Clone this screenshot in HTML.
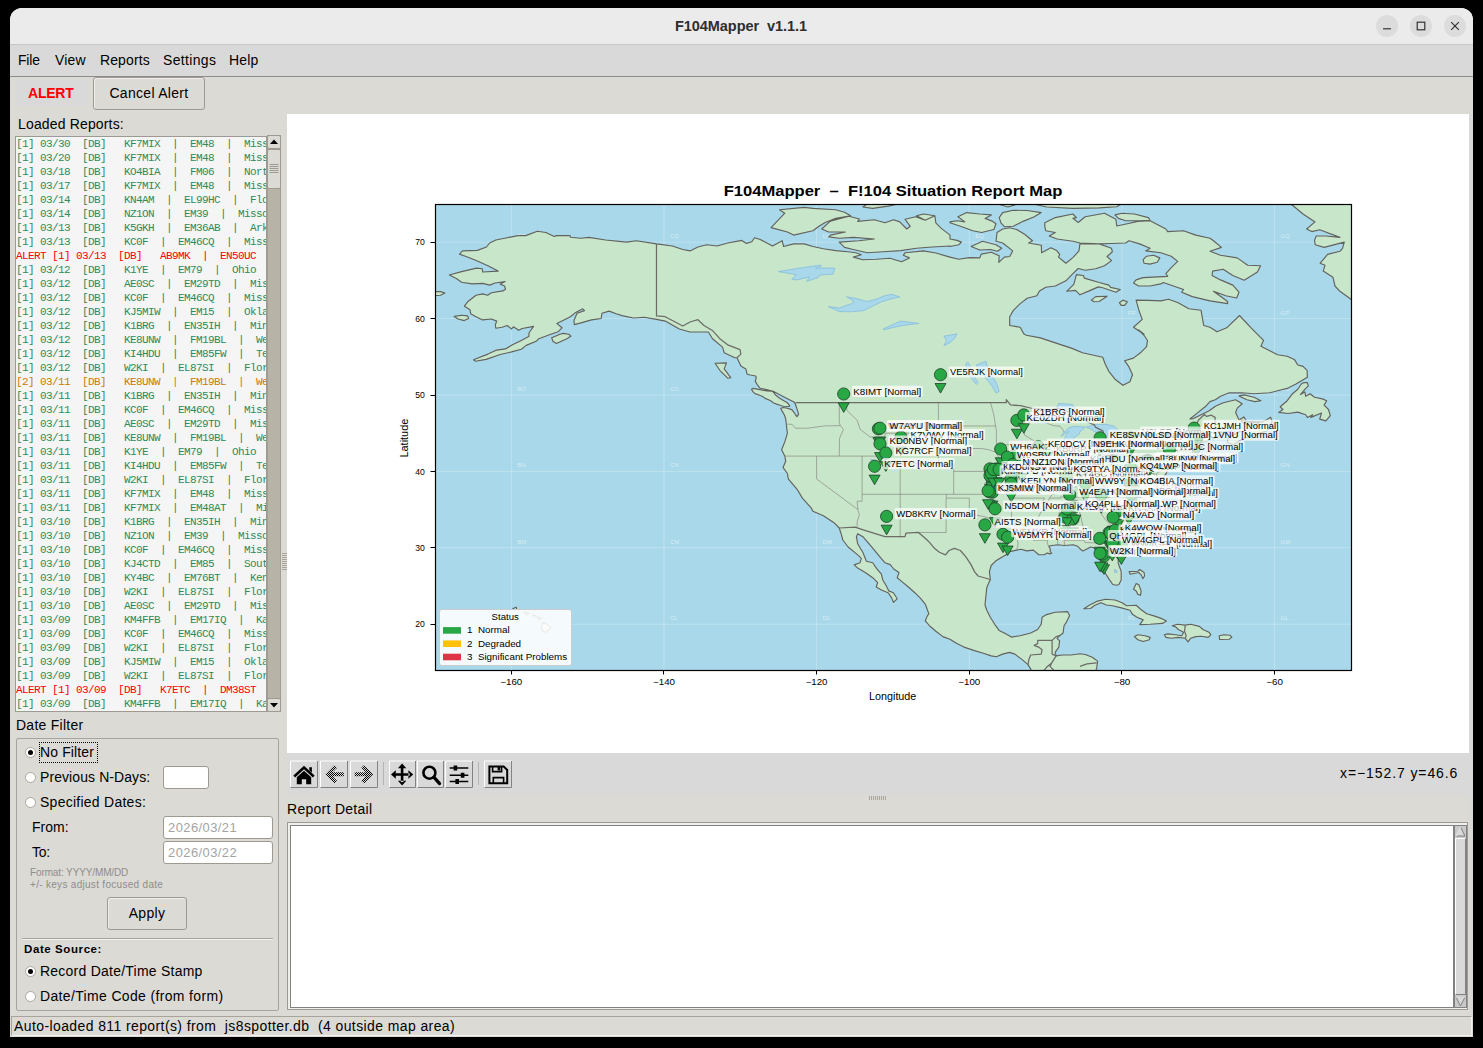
<!DOCTYPE html>
<html><head><meta charset="utf-8"><title>F104Mapper v1.1.1</title>
<style>
*{box-sizing:border-box;margin:0;padding:0}
html,body{width:1483px;height:1048px;overflow:hidden;background:#000}
body{font-family:"Liberation Sans",sans-serif;font-size:15px;color:#000;position:relative}
.a{position:absolute}
#win{left:10px;top:8px;width:1463px;height:1029px;background:#dcdad5;border-radius:12px 12px 0 0}
#title{left:10px;top:8px;width:1463px;height:37px;background:#ebebeb;border-bottom:1px solid #c6c6c6;border-radius:12px 12px 0 0}
#title .t{left:0;width:1462px;top:9px;text-align:center;font-weight:bold;font-size:15px;color:#2e2e2e}
.wb{width:22px;height:22px;border-radius:11px;background:#dcdcdc;top:15px}
#menu{left:10px;top:45px;width:1463px;height:32px;background:#d9d9d9;border-bottom:1px solid #8c8c8c}
#menu span{position:absolute;top:3.4px;font-size:15.5px}
.lbl{font-size:15px;white-space:nowrap;line-height:18px}
.btn{border:1px solid #9e9a91;background:#dcdad5;border-radius:3px;text-align:center;font-size:15px;box-shadow:inset 1px 1px 0 #efeeeb}
.entry{background:#fff;border:1px solid #9e9a91;border-radius:3px;font-size:14px;color:#a3a3a3;padding:2px 0 0 4px;line-height:16px}
.radio{width:11px;height:11px;border-radius:6px;background:#fff;border:1px solid #aaa69d}
.radio.on:after{content:"";position:absolute;left:2px;top:2px;width:5px;height:5px;border-radius:3px;background:#000}
#list{left:15px;top:136px;width:252px;height:576px;background:#f5f5f5;border:1px solid #9e9a91;overflow:hidden;font-family:"Liberation Mono",monospace;font-size:11px;letter-spacing:-0.6px;line-height:14px;white-space:pre;color:#2e8b57}
#list div{height:14px;padding-left:0}
#list .r{color:#ff0000}
#list .o{color:#cc7a00}
.tb{width:27px;height:27px;top:761px;background:#d9d9d9;border:1px solid;border-color:#fff #828282 #828282 #fff}
.tb svg{position:absolute;left:0;top:0}
</style></head><body>
<div id="win" class="a"></div>
<div id="title" class="a"><div class="t a"><span style="font-size:14.5px;letter-spacing:-0.05px">F104Mapper&nbsp; v1.1.1</span></div></div>
<div class="wb a" style="left:1376px"></div><div class="wb a" style="left:1410px"></div><div class="wb a" style="left:1444px"></div>
<svg class="a" style="left:1376px;top:15px" width="90" height="22" viewBox="0 0 90 22" fill="none" stroke="#2e2e2e" stroke-width="1.15"><path d="M7 13.8h8"/><rect x="41.2" y="7.2" width="7.6" height="7.6"/><path d="M75.2 7.2l7.6 7.6M82.8 7.2l-7.6 7.6"/></svg>
<div id="menu" class="a"><span style="left:8px"><span style="font-size:13.97px;letter-spacing:-0.19px">File</span></span><span style="left:45px"><span style="font-size:13.97px;letter-spacing:0.20px">View</span></span><span style="left:90px"><span style="font-size:13.97px;letter-spacing:0.13px">Reports</span></span><span style="left:153px"><span style="font-size:13.97px;letter-spacing:0.35px">Settings</span></span><span style="left:219px"><span style="font-size:13.97px;letter-spacing:0.22px">Help</span></span></div>
<div class="a" style="left:16px;top:80px;width:72px;height:26px;background:#d9d9d9"></div>
<div class="a lbl" style="left:28px;top:84px;font-weight:bold;color:#ff0000"><span style="font-size:13.97px;letter-spacing:-0.21px">ALERT</span></div>
<div class="a btn" style="left:93px;top:77px;width:112px;height:33px;line-height:30px"><span style="font-size:13.97px;letter-spacing:0.31px">Cancel Alert</span></div>
<div class="a lbl" style="left:18px;top:115px"><span style="font-size:13.97px;letter-spacing:0.17px">Loaded Reports:</span></div>
<div id="list" class="a"><div>[1] 03/30  [DB]   KF7MIX  |  EM48  |  Missouri</div><div>[1] 03/20  [DB]   KF7MIX  |  EM48  |  Missouri</div><div>[1] 03/18  [DB]   KO4BIA  |  FM06  |  North Carolina</div><div>[1] 03/17  [DB]   KF7MIX  |  EM48  |  Missouri</div><div>[1] 03/14  [DB]   KN4AM  |  EL99HC  |  Florida</div><div>[1] 03/14  [DB]   NZ1ON  |  EM39  |  Missouri</div><div>[1] 03/13  [DB]   K5GKH  |  EM36AB  |  Arkansas</div><div>[1] 03/13  [DB]   KC0F  |  EM46CQ  |  Missouri</div><div class="r">ALERT [1] 03/13  [DB]   AB9MK  |  EN50UC</div><div>[1] 03/12  [DB]   K1YE  |  EM79  |  Ohio</div><div>[1] 03/12  [DB]   AE0SC  |  EM29TD  |  Missouri</div><div>[1] 03/12  [DB]   KC0F  |  EM46CQ  |  Missouri</div><div>[1] 03/12  [DB]   KJ5MIW  |  EM15  |  Oklahoma</div><div>[1] 03/12  [DB]   K1BRG  |  EN35IH  |  Minnesota</div><div>[1] 03/12  [DB]   KE8UNW  |  FM19BL  |  West Virginia</div><div>[1] 03/12  [DB]   KI4HDU  |  EM85FW  |  Tennessee</div><div>[1] 03/12  [DB]   W2KI  |  EL87SI  |  Florida</div><div class="o">[2] 03/11  [DB]   KE8UNW  |  FM19BL  |  West Virginia</div><div>[1] 03/11  [DB]   K1BRG  |  EN35IH  |  Minnesota</div><div>[1] 03/11  [DB]   KC0F  |  EM46CQ  |  Missouri</div><div>[1] 03/11  [DB]   AE0SC  |  EM29TD  |  Missouri</div><div>[1] 03/11  [DB]   KE8UNW  |  FM19BL  |  West Virginia</div><div>[1] 03/11  [DB]   K1YE  |  EM79  |  Ohio</div><div>[1] 03/11  [DB]   KI4HDU  |  EM85FW  |  Tennessee</div><div>[1] 03/11  [DB]   W2KI  |  EL87SI  |  Florida</div><div>[1] 03/11  [DB]   KF7MIX  |  EM48  |  Missouri</div><div>[1] 03/11  [DB]   KF7MIX  |  EM48AT  |  Missouri</div><div>[1] 03/10  [DB]   K1BRG  |  EN35IH  |  Minnesota</div><div>[1] 03/10  [DB]   NZ1ON  |  EM39  |  Missouri</div><div>[1] 03/10  [DB]   KC0F  |  EM46CQ  |  Missouri</div><div>[1] 03/10  [DB]   KJ4CTD  |  EM85  |  South Carolina</div><div>[1] 03/10  [DB]   KY4BC  |  EM76BT  |  Kentucky</div><div>[1] 03/10  [DB]   W2KI  |  EL87SI  |  Florida</div><div>[1] 03/10  [DB]   AE0SC  |  EM29TD  |  Missouri</div><div>[1] 03/09  [DB]   KM4FFB  |  EM17IQ  |  Kansas</div><div>[1] 03/09  [DB]   KC0F  |  EM46CQ  |  Missouri</div><div>[1] 03/09  [DB]   W2KI  |  EL87SI  |  Florida</div><div>[1] 03/09  [DB]   KJ5MIW  |  EM15  |  Oklahoma</div><div>[1] 03/09  [DB]   W2KI  |  EL87SI  |  Florida</div><div class="r">ALERT [1] 03/09  [DB]   K7ETC  |  DM38ST</div><div>[1] 03/09  [DB]   KM4FFB  |  EM17IQ  |  Kansas</div></div>
<div class="a" style="left:267px;top:135px;width:14px;height:577px;background:#b8b3a7;border-left:1px solid #a39e92;border-right:1px solid #a39e92"></div>
<div class="a" style="left:267px;top:135px;width:14px;height:14px;background:#dcdad5;border:1px solid #9e9a91;border-radius:2px"></div>
<svg class="a" style="left:267px;top:135px" width="14" height="14"><path d="M3 9L7 4.5L11 9z" fill="#000"/></svg>
<div class="a" style="left:267px;top:698px;width:14px;height:14px;background:#dcdad5;border:1px solid #9e9a91;border-radius:2px"></div>
<svg class="a" style="left:267px;top:698px" width="14" height="14"><path d="M3 5L7 9.5L11 5z" fill="#000"/></svg>
<div class="a" style="left:267px;top:149px;width:14px;height:40px;background:#dcdad5;border:1px solid #9e9a91;border-radius:2px"></div>
<svg class="a" style="left:267px;top:149px" width="14" height="40" stroke="#9e9a91" stroke-width="1"><path d="M2.5 15.5h9M2.5 17.5h9M2.5 19.5h9M2.5 21.5h9M2.5 23.5h9"/></svg>
<svg class="a" style="left:281px;top:552px" width="6" height="20" stroke="#a9a59c" stroke-width="1"><path d="M1 1.5h5M1 3.5h5M1 5.5h5M1 7.5h5M1 9.5h5M1 11.5h5M1 13.5h5M1 15.5h5M1 17.5h5"/></svg>
<div class="a lbl" style="left:16px;top:716px"><span style="font-size:13.97px;letter-spacing:0.27px">Date Filter</span></div>
<div class="a" style="left:16px;top:738px;width:263px;height:273px;border:1px solid #a8a49b;border-radius:2px"></div>
<div class="a radio on" style="left:25px;top:747px"></div>
<div class="a" style="left:39px;top:742px;width:59px;height:21px;border:1px dotted #000"></div>
<div class="a lbl" style="left:40px;top:743px"><span style="font-size:13.97px;letter-spacing:0.13px">No Filter</span></div>
<div class="a radio" style="left:25px;top:772px"></div>
<div class="a lbl" style="left:40px;top:768px"><span style="font-size:13.97px;letter-spacing:0.10px">Previous N-Days:</span></div>
<div class="a entry" style="left:163px;top:766px;width:46px;height:23px"></div>
<div class="a radio" style="left:25px;top:797px"></div>
<div class="a lbl" style="left:40px;top:793px"><span style="font-size:13.97px;letter-spacing:0.27px">Specified Dates:</span></div>
<div class="a lbl" style="left:32px;top:818px"><span style="font-size:13.97px;letter-spacing:0.02px">From:</span></div>
<div class="a entry" style="left:163px;top:816px;width:110px;height:23px"><span style="font-size:12.90px;letter-spacing:0.46px">2026/03/21</span></div>
<div class="a lbl" style="left:32px;top:843px"><span style="font-size:13.97px;letter-spacing:-0.19px">To:</span></div>
<div class="a entry" style="left:163px;top:841px;width:110px;height:23px"><span style="font-size:12.90px;letter-spacing:0.46px">2026/03/22</span></div>
<div class="a" style="left:30px;top:867px;font-size:10px;line-height:12px;color:#8d8d8d;white-space:nowrap"><span style="font-size:10.00px;letter-spacing:-0.12px">Format: YYYY/MM/DD</span><br><span style="font-size:10.00px;letter-spacing:0.30px">+/- keys adjust focused date</span></div>
<div class="a btn" style="left:107px;top:897px;width:80px;height:33px;line-height:30px"><span style="font-size:13.97px;letter-spacing:0.35px">Apply</span></div>
<div class="a" style="left:22px;top:938px;width:251px;height:2px;border-top:1px solid #a8a49b;border-bottom:1px solid #f2f1ef"></div>
<div class="a" style="left:24px;top:943px;font-size:11.5px;font-weight:bold;white-space:nowrap"><span style="font-size:11.50px;letter-spacing:0.59px">Date Source:</span></div>
<div class="a radio on" style="left:25px;top:966px"></div>
<div class="a lbl" style="left:40px;top:962px"><span style="font-size:13.97px;letter-spacing:0.25px">Record Date/Time Stamp</span></div>
<div class="a radio" style="left:25px;top:991px"></div>
<div class="a lbl" style="left:40px;top:987px"><span style="font-size:13.97px;letter-spacing:0.36px">Date/Time Code (from form)</span></div>
<div class="a" style="left:11px;top:1016px;width:1461px;height:20px;border:1px solid;border-color:#a8a49b #f2f1ef #f2f1ef #a8a49b"></div>
<div class="a lbl" style="left:14px;top:1017px"><span style="font-size:13.97px;letter-spacing:0.41px">Auto-loaded 811 report(s) from&nbsp; js8spotter.db&nbsp; (4 outside map area)</span></div>
<div class="a" style="left:287px;top:114px;width:1182px;height:639px;background:#fff"></div>
<div class="a" style="left:287px;top:753px;width:1186px;height:42px;background:#d9d9d9"></div><div class="a" style="left:1469px;top:114px;width:4px;height:902px;background:#d9d9d9"></div>
<div class="a lbl" style="left:1340px;top:764px;font-size:14px"><span style="font-size:13.97px;letter-spacing:0.92px">x=−152.7 y=46.6</span></div>
<svg class="a" style="left:868px;top:795px" width="20" height="6" stroke="#a9a59c" stroke-width="1"><path d="M1.5 1v4M3.5 1v4M5.5 1v4M7.5 1v4M9.5 1v4M11.5 1v4M13.5 1v4M15.5 1v4M17.5 1v4"/></svg>
<div class="a lbl" style="left:287px;top:800px"><span style="font-size:13.97px;letter-spacing:0.30px">Report Detail</span></div>
<div class="a" style="left:287px;top:822px;width:1181px;height:188px;border:1px solid #9e9a91;background:#efeeeb"></div>
<div class="a" style="left:290px;top:825px;width:1164px;height:183px;background:#fff;border:1px solid #828282"></div>
<div class="a" style="left:1454px;top:825px;width:13px;height:183px;background:#c9c9c9;border:1px solid #828282"></div>
<div class="a" style="left:1455px;top:838px;width:11px;height:157px;background:#d9d9d9;border:1px solid;border-color:#fff #828282 #828282 #fff"></div>
<svg class="a" style="left:1455px;top:826px" width="11" height="11"><path d="M5.5 1L10 10H1z" fill="#d9d9d9" stroke="#828282"/><path d="M5.5 1L1 10" stroke="#fff"/></svg>
<svg class="a" style="left:1455px;top:996px" width="11" height="11"><path d="M5.5 10L10 1H1z" fill="#d9d9d9" stroke="#828282"/><path d="M1 1H10" stroke="#fff"/></svg>
<svg class="a" style="left:0;top:0" width="1483" height="1048" viewBox="0 0 1483 1048">
<defs><pattern id="st" width="2" height="2" patternUnits="userSpaceOnUse"><rect width="1" height="1" fill="#000"/><rect x="1" y="1" width="1" height="1" fill="#000"/></pattern></defs>
<g id="tbb">
<path d="M290.5,787.5v-26.5h27M320.5,787.5v-26.5h27M350.5,787.5v-26.5h27M389.5,787.5v-26.5h26M417.5,787.5v-26.5h26M445.5,787.5v-26.5h27M484.5,787.5v-26.5h27" stroke="#fff" fill="none"/>
<path d="M290.5,787.5h27v-26.5M320.5,787.5h27v-26.5M350.5,787.5h27v-26.5M389.5,787.5h26v-26.5M417.5,787.5h26v-26.5M445.5,787.5h27v-26.5M484.5,787.5h27v-26.5" stroke="#828282" fill="none"/>
<path d="M383.5,762v23M478.5,762v23" stroke="#b5b5b5" fill="none"/>
</g>
<!-- home -->
<path d="M304,765.8L314.6,775.6L312.9,777.4L304,769.2L295.1,777.4L293.4,775.6ZM296.8,777.3L304,770.8L311.2,777.3V784.2H306.2V779.2H301.8V784.2H296.8ZM309.3,767.2h2.6v5.4l-2.6,-2.4z" fill="#000"/>
<!-- back / forward (disabled, stippled) -->
<path d="M325.3,774.3L334.4,765L337.2,767.7L332.6,772.3H343.8V776.3H332.6L337.2,780.9L334.4,783.6Z" fill="url(#st)"/>
<path d="M373.2,774.3L364.1,765L361.3,767.7L365.9,772.3H354.7V776.3H365.9L361.3,780.9L364.1,783.6Z" fill="url(#st)"/>
<!-- pan -->
<path d="M400.8,767h2.6v15h-2.6zM394.6,773.2h15v2.6h-15zM402.1,763.4l4.2,4.8h-8.4zM402.1,785.6l4.2,-4.8h-8.4zM391,774.5l4.8,-4.2v8.4zM413.2,774.5l-4.8,-4.2v8.4z" fill="#000"/>
<!-- zoom -->
<circle cx="429.4" cy="772.7" r="6" fill="none" stroke="#000" stroke-width="2.6"/>
<path d="M434.3,777.6L439.6,783.6" stroke="#000" stroke-width="3.2" stroke-linecap="round"/>
<!-- configure -->
<path d="M449.7,767.9h18.6M449.7,775.2h18.6M449.7,781.4h18.6" stroke="#000" stroke-width="1.5" fill="none"/>
<path d="M453.6,765.4h3.6v5h-3.6zM460.8,772.7h3.6v5h-3.6zM455.4,778.9h3.6v5h-3.6z" fill="#000"/>
<!-- save -->
<path d="M489.4,766.4H503.6L507.2,770V783.3H489.4Z" fill="none" stroke="#000" stroke-width="2"/>
<path d="M492.6,766.4V771.6H501.6V766.4M493.3,783.3V777.6H503.6V783.3" fill="none" stroke="#000" stroke-width="1.6"/>
<rect x="497.6" y="766.6" width="2.6" height="3.8" fill="#000"/>
</svg>
<svg class="a" style="left:0;top:0" width="1483" height="1048" viewBox="0 0 1483 1048" font-family="Liberation Sans,sans-serif">
<defs><clipPath id="mc"><rect x="435" y="204" width="916" height="466"/></clipPath></defs>
<rect x="435" y="204" width="916" height="466" fill="#a8d8ea"/>
<g clip-path="url(#mc)">
<path d="M511.3,204V670M664.0,204V670M816.6,204V670M969.3,204V670M1122.0,204V670M1274.6,204V670M435,624.2H1351M435,547.8H1351M435,471.4H1351M435,395.0H1351M435,318.6H1351M435,242.2H1351" stroke="#fff" stroke-opacity="0.32" stroke-width="0.8" fill="none"/>
<g font-size="6" fill="#fff" fill-opacity="0.55"><text x="364.7" y="696.6">AK</text><text x="364.7" y="620.2">AL</text><text x="364.7" y="543.8">AM</text><text x="364.7" y="467.4">AN</text><text x="364.7" y="391.0">AO</text><text x="364.7" y="314.6">AP</text><text x="364.7" y="238.2">AQ</text><text x="517.3" y="696.6">BK</text><text x="517.3" y="620.2">BL</text><text x="517.3" y="543.8">BM</text><text x="517.3" y="467.4">BN</text><text x="517.3" y="391.0">BO</text><text x="517.3" y="314.6">BP</text><text x="517.3" y="238.2">BQ</text><text x="670.0" y="696.6">CK</text><text x="670.0" y="620.2">CL</text><text x="670.0" y="543.8">CM</text><text x="670.0" y="467.4">CN</text><text x="670.0" y="391.0">CO</text><text x="670.0" y="314.6">CP</text><text x="670.0" y="238.2">CQ</text><text x="822.6" y="696.6">DK</text><text x="822.6" y="620.2">DL</text><text x="822.6" y="543.8">DM</text><text x="822.6" y="467.4">DN</text><text x="822.6" y="391.0">DO</text><text x="822.6" y="314.6">DP</text><text x="822.6" y="238.2">DQ</text><text x="975.3" y="696.6">EK</text><text x="975.3" y="620.2">EL</text><text x="975.3" y="543.8">EM</text><text x="975.3" y="467.4">EN</text><text x="975.3" y="391.0">EO</text><text x="975.3" y="314.6">EP</text><text x="975.3" y="238.2">EQ</text><text x="1128.0" y="696.6">FK</text><text x="1128.0" y="620.2">FL</text><text x="1128.0" y="543.8">FM</text><text x="1128.0" y="467.4">FN</text><text x="1128.0" y="391.0">FO</text><text x="1128.0" y="314.6">FP</text><text x="1128.0" y="238.2">FQ</text><text x="1280.6" y="696.6">GK</text><text x="1280.6" y="620.2">GL</text><text x="1280.6" y="543.8">GM</text><text x="1280.6" y="467.4">GN</text><text x="1280.6" y="391.0">GO</text><text x="1280.6" y="314.6">GP</text><text x="1280.6" y="238.2">GQ</text></g>
<path d="M656.5,243.9L672.3,246L682.8,249.5L690,250.9L697.9,247L706.7,244.8L717.2,246L727.7,243L741.8,240.4L746.5,243.4L751.8,241.8L754.6,237.7L760.2,239.5L772.5,246L782.2,240.7L783.6,246.5L793.6,243.9L804.1,243.9L812.9,246.5L823.4,248.8L835.7,250.6L848,251.8L855.9,252.7L861.2,254.8L853.3,257.1L862.9,259.7L876.1,259.3L890.1,258.3L901.5,261.8L909.4,257.9L903.3,255.3L905.1,252.7L923.5,250.9L935.8,253L950,257.1L958.8,259.3L969.3,257.6L979.8,257.9L981.2,254.1L991.3,252.3L999.2,255.8L998.8,262.3L1004.4,257.1L1009.7,256.5L1012.7,250.9L1002.7,243L996,241.3L997,232.5L1002.7,229L1009.7,227.7L1016.7,229.5L1024.6,234.2L1032.5,240.7L1028.6,243L1041.3,245.3L1041.6,252.7L1050.9,247.8L1056.7,250.6L1059.7,254.4L1058.5,257.1L1065.9,263.2L1072.9,257.6L1079,250.9L1079.9,243.9L1099.2,243.9L1111.5,248.3L1112.4,251.8L1107.1,256.5L1111.5,260.6L1104.5,265.8L1095.7,268.8L1085.2,270.2L1078.2,268.5L1072.9,273.7L1065.9,280.8L1055.3,286L1045.7,287.3L1039.5,290.9L1036.9,295.7L1027.2,298.3L1020.2,303.6L1013.2,310.6L1009.7,316.7L1009.7,325.5L1020.2,327.3L1023.7,333.8L1026.3,335.3L1040.4,337.9L1050.9,341.4L1061.4,344.9L1072,348.4L1082.5,352.8L1094.8,355.5L1102.7,357.2L1105.3,364.2L1108.8,371.3L1115,379.2L1122.9,385.3L1129.9,381.8L1132.5,374.8L1129,366.9L1124.6,360.7L1133.4,358.1L1140.4,352.8L1146.6,346.7L1147.5,340.5L1144,335.3L1138.7,330L1144,334.3L1133.5,327.3L1142.2,319.4L1138.7,309.7L1136.1,300.1L1148.4,300.4L1160.7,300.9L1168.6,299.2L1178.2,302.7L1188.8,308.8L1201,310.2L1203.7,325.5L1210,327.3L1217,331.7L1226.7,327.8L1239.5,315.5L1251.3,328.2L1263.5,340.4L1260.9,346.2L1277.6,354.8L1287.2,356.2L1294.3,359.4L1297.8,365L1303,366.4L1307.1,370.3L1307.4,377.3L1296,384L1287.2,388.4L1276.7,391L1269.7,392.8L1253.9,393.7L1241.6,392.8L1229.3,392.8L1220.5,396.3L1215.3,399.8L1210,401.6L1205.7,406.3L1196.9,413.4L1189.9,419L1193.4,418.6L1202.2,414.2L1209.2,410.7L1215.4,406.3L1223.3,402.8L1235.6,399.8L1242.2,403.7L1237.3,408.1L1235.6,412.5L1239.1,419.9L1243.8,416.9L1246.6,421.3L1261.9,422.1L1267.2,419.5L1270.7,417.2L1272.1,422.1L1267,430.9L1250.2,436.3L1241.8,439.3L1233.4,444.7L1227.3,442.4L1228.1,437.8L1241,430.9L1237.2,428.6L1228.8,431.7L1220.4,432.4L1221.2,434.7L1213.6,438.5L1205.9,441.6L1197.5,443.1L1193,447.7L1192.2,453.8L1194.5,457.6L1198.3,457.6L1198.3,459.2L1193,459.9L1183.8,461.5L1175.4,462.2L1170.1,464.5L1181.5,463L1183.8,464.5L1173.1,466.8L1167.8,466.8L1167.8,468.3L1166.2,473.7L1160.9,479.8L1156.3,475.2L1159.4,480.6L1159.4,483.6L1157.1,487.4L1153.3,492.8L1152.5,492L1150.2,485.9L1151,481.3L1149.4,477.5L1148.7,481.3L1150.2,487.4L1150.2,495.1L1153.3,497.4L1154.8,505L1156.3,508.1L1149.4,511.1L1141.8,513.4L1137.2,518L1132.7,518L1128.8,521.1L1128.1,523.4L1119.7,528.7L1115.1,532.5L1112,537.1L1110.5,542.5L1112,547.8L1114.3,553.9L1118.2,559.3L1118.2,563.1L1121.2,571.5L1121.2,579.9L1118.9,584.5L1116.6,585.2L1112.8,584.5L1109,579.1L1105.2,573L1101.4,566.9L1099.8,563.8L1101.4,558.5L1099.8,554.7L1093.7,547.8L1090.7,547L1083,550.9L1081.5,550.1L1077.7,546.3L1073.1,544.7L1064.7,545.5L1057.9,544.7L1051.7,545.5L1048.7,546.3L1050.2,548.6L1050.2,551.6L1051.7,553.1L1050.2,553.9L1047.2,553.1L1044.1,554.7L1038.8,554.7L1033.4,550.1L1026.6,550.9L1021.2,549.3L1016.6,550.1L1009.8,551.6L1008.7,553.2L1002.6,556.7L995.6,561.1L991.2,565.5L989.4,571.6L990.3,579.5L986.8,587.4L985.9,596.2L985,605L986.8,610.2L990.3,617.2L994.7,624.3L999.1,630.4L1004.3,633L1011.4,637.1L1020.1,635.7L1030.7,633L1037.7,629.5L1041.2,624.3L1042.1,617.2L1046.5,614.6L1055.2,612.3L1067.5,611.6L1069.6,615.5L1066.7,621.6L1064,626L1063.1,633L1059.6,635.7L1057,638.3L1059.6,640.9L1058.8,647.1L1055.2,652.4L1056.1,655.9L1062.3,655L1071,655L1080,653.8L1085.3,654.5L1092.3,657.3L1097.6,661.1L1096.7,668.2L1094.9,673.4L1033.3,673.4L1028,664.6L1021.9,659.4L1014.9,654.1L1009.6,652.4L1002.6,654.1L996.4,656.7L991.2,655.9L983.3,653.2L974.5,650.6L964,647.1L956.9,643.6L949.9,639.2L942.9,636.6L935.9,631.3L929.7,626L925.3,620.8L927.1,616.4L928.8,613.7L925.3,604.1L920.1,597.9L914.8,592.7L907.8,586.5L902.5,582.1L897.2,577.7L899,572.5L893.7,569L890.2,564.6L885,562.8L879.7,556.7L876.2,552.3L869.1,543.8L862.9,536.7L857.7,533.8L856.4,536.7L857.7,543.8L862.9,552.5L866.4,561.3L872.7,562.8L876.5,568.4L881.4,574.2L882.8,580L886.4,586L888.8,590.9L893.4,592.7L897.2,598.8L893.4,602.3L891.6,597.9L888.1,592.7L881.4,590L876.2,587L877.6,582.7L872.7,577.7L866,573L857.7,568.1L854.2,564.9L860,562.8L861.3,558.4L857.7,554.9L848.1,547L842.8,540L841,533.2L839.2,528L834,522.7L823.4,515.7L812.9,511.3L811.1,507.8L802.4,498.1L797.1,489.3L788.3,478.8L787.4,473.5L783,467.4L785.7,461.2L784.8,456L781.6,449.8L784.8,441.9L787.4,433.2L786.2,423.5L785.7,419L784.4,415L782,410.9L780.7,408.2L783.4,407.5L787.4,408.2L791.8,409.6L793.5,411.6L795.2,414.3L796.9,416.7L798.6,414.3L797.6,410.9L795.2,403.5L793.9,402L787.4,398.7L780.7,395.3L773.2,391.3L766.4,389.6L760,388.2L757.6,385.2L755.2,381.1L756.3,377.7L755.6,376L750.2,375L747.1,374.2L745.8,368.9L740.9,365.9L737,357.7L734.8,357.7L724.2,352.7L722.5,347.1L712.5,338.7L708.4,332L690,332L679.3,329L665.2,321.1L656.5,319.4L644.2,317.3L633.6,318L623.1,315.9L616.1,313.8L609.1,311.1L602,313.2L601.2,318.5L591.5,319.9L581,322.9L574.3,324.6L574,320.3L577.1,313.2L584.5,310.6L582.7,308.8L575.7,312.4L570.4,316.7L563.4,320.3L556.8,323.4L562,327.8L558.2,331.7L549.4,334.8L538.8,338.7L536.2,341.3L526.2,345.4L521.3,349.2L511.6,351.9L500.2,354.5L486.2,359.4L475.3,361.2L473.5,359.8L487.9,354.1L496.7,350.1L505.5,348.9L512.5,344.8L521.3,340.4L528.7,336.6L529.2,332.5L533.6,326.4L522.2,328.5L518.7,330.3L513.4,326.8L511.6,329L507.2,325.5L502,327.3L495.8,328.2L495.3,325L496.7,321.1L491.4,319L482.7,319.9L476,316.7L470.7,313.8L470,309.7L464.4,306.2L467.7,301.8L476,295.3L482.7,293.9L487.6,295.3L491.4,292.7L502.9,290.9L505.5,289.2L504.6,286L500.2,284.3L505.1,281.6L495,283L489.7,285.1L482.7,283.4L472.1,283.9L461.6,282.2L456.3,278.5L449.3,275L461.6,271.6L476.5,268.1L482.3,268.8L482.7,272L498.1,271.1L487.9,265.8L475.6,260.2L466,256.5L459.5,254.1L462.5,250.9L477.4,250.4L486.5,247L489.7,243L495.8,240L507.2,237.7L517.8,235.6L525.7,235.6L537.4,231.2L545.9,232.5L554.3,236.5L556.4,235.6L570.1,235.5L570.4,237.2L581,238.3L588.9,237.4L605.6,240L626.6,242.1L636.3,240.7ZM433.5,291.6L440.5,291.6L444.9,293L440.5,295.3L433.5,295.7ZM454.2,316.4L461.6,315.3L467.7,315.9L468.6,318.5L464.2,320.6L458.1,319ZM551.7,337.8L559.9,334.3L563.4,333.4L568.7,334.3L571,336.1L566.9,338.7L556.4,343.4L552.9,341.3ZM430,271.1L435.3,272L435.3,274.6L430,275.5ZM771.1,227.6L784.8,213.2L779.5,209.7L804.1,207.4L812.9,208.4L835.7,209.7L844.5,212.3L850.6,215.8L835.7,218.4L825.2,222.5L819,226.3L812.9,230.7L793.6,235.1L787.4,232ZM821.7,229L830.4,221.1L848.9,216.2L859.4,219L857.7,221.4L874.3,219.7L884.9,222.8L893.6,219.7L899.8,221.9L906.8,229L910.3,226.3L905.1,219.3L915.6,216.7L925.2,220.2L934.9,215.8L935.8,222.8L941,228.1L950,235.1L950,239L957,240.4L961.4,242.1L958.8,244.8L950,246.5L950,246L932.3,247L916.5,248.3L900.7,250.6L883.1,251.8L867.3,252.7L853.3,249.5L844.5,247.4L839.2,242.1L858.5,240.7L874.3,239L853.3,237.4L839.2,238.3L828.7,236.9L830.4,235.1L845.4,232L828.7,232ZM916.5,215.8L923.5,214L934.9,215.8L925.2,220.2ZM862.9,207L869.1,202.6L904.2,202.6L888.4,206.1L872.6,208.4ZM950,221.9L957,220.7L964.9,221.9L957.9,216.7L966.7,212.6L979.8,214L991.3,214.9L985.1,218.4L992.1,221.1L996,223.7L993.9,229.5L981.6,232.5L972.8,230.7L960.5,226.3L950,222.8ZM971.1,246.5L982.5,241.3L996,244.8L1001.8,248.3L997.4,251.3L990.4,249.5L979.8,250ZM999.2,217.6L1002.7,212.6L1013.2,210.2L1027.2,210.5L1041.3,212.6L1034.3,216.7L1023.7,221.1L1013.2,226.3L1004.4,226.7L1000.9,222.8ZM993,202.6L1007.9,207L1015,204.9L1016.7,202.6ZM1027.2,202.6L1046.6,207L1072.9,208.4L1099.2,207.9L1116.8,206.7L1123.8,202.6ZM1044.8,226.3L1044.8,222.8L1055.3,217.6L1072.9,214L1076.4,217.6L1072.9,218.4L1078.2,222.5L1085.2,216.7L1104.5,213.2L1115.9,219.3L1116.8,226L1127.3,223.7L1137.8,221.4L1150.1,220.7L1165.9,229L1167.7,231.6L1183.5,230.7L1195.8,235.1L1210,238.3L1213.5,240.7L1221.4,247.4L1210,251.3L1220.5,255.3L1237.2,257.9L1247.7,265.3L1260.6,265.8L1257.4,272L1244.2,280.2L1232.8,275.5L1223.2,269.3L1212.6,271.1L1212.1,275.5L1220.5,279.9L1232.8,285.1L1239,292.2L1236.7,298L1225.8,295.7L1213.5,291.3L1227.6,301.5L1227.6,303.6L1210,300.9L1192.3,296.6L1181.7,292.2L1183.5,289.5L1163.3,282.5L1160.7,283.9L1150.1,286L1138.7,286L1133.5,282.9L1136.1,279.9L1143.1,277.6L1167.7,276.4L1165.9,273.7L1171.2,267.6L1177.7,261.4L1171.2,256.2L1160.7,252.7L1145.7,250.9L1150.1,248.3L1139.6,243.9L1129.1,240.7L1125.6,243L1111.5,243.5L1099.2,243.9L1079.9,243L1072.9,241.3L1057.1,239L1049.2,236L1055.3,232.5L1045.7,230.7ZM1115,214.9L1122,213.2L1134.3,214L1148.4,217.6L1150.1,220.2L1139.6,220.7L1125.6,220.7L1118.5,218.4ZM1066.7,291.3L1073.8,284.3L1076.4,274.6L1083.4,275.5L1084.3,278.1L1099.2,282.5L1108.9,285.1L1110.6,287.4L1120.3,289.5L1115.9,292.2L1102.7,287.8L1098.3,286.9L1090.4,290.4L1079.9,294.8L1075.5,290.4ZM1091.3,300.1L1095.7,296.6L1107.1,296.2L1099.2,301.5L1094,301.8ZM1119.4,302.7L1122.9,300.1L1127.3,301.8L1124.7,305.3L1121.2,305.3ZM1143.1,259.7L1146.6,256.2L1153.6,255.3L1159.8,257.9L1157.2,262.3L1150.1,264.1L1144,263.2ZM1287.2,202.6L1292.5,205.3L1303,214L1315,221.9L1306.6,229L1311.8,231.6L1319.7,229.8L1339.9,237.4L1325.9,236L1316.2,236L1314.5,240.4L1315.3,244.8L1324.1,247.4L1344.3,242.1L1342.5,248.3L1339.9,251.3L1327.6,254.4L1320.2,263.2L1325,265.3L1323.2,271.1L1332.9,277.2L1335,286L1339.9,291.3L1355.7,302.7L1355.7,202.6ZM1301.3,384L1297.8,389.3L1292.5,393.7L1287.2,400.7L1280.2,406.8L1282.9,409.5L1278.8,412.4L1288.1,413.5L1297.8,412.1L1305.7,414.7L1307.4,417.4L1312.7,414.7L1310.9,417.4L1321.5,413L1319.7,419.1L1325.9,420.9L1330.3,415.6L1328.5,409.5L1324.1,405.1L1326.7,400.7L1322.4,398.9L1314.5,397.2L1310.1,393.7L1305.7,396.3L1304.8,391.9L1300.4,394.5L1304.8,389.3L1308.3,385.8L1307.4,382.6L1303.9,382.6ZM1239,395.9L1244.2,394.9L1253.9,397.2L1260.9,400.7L1254.8,401.6L1246.9,399.8ZM1241,420.2L1250.2,422.5L1259.4,422.1L1255.5,425.6L1247.9,424.8L1242.6,422.5ZM751.5,389.2L752.9,388.4L756.3,388.9L762.4,390.2L767.1,390.9L771.8,391.1L773.2,391.9L775.9,395.3L779.3,398L783.4,400.4L787.4,402.8L789.8,405.8L789.1,406.5L783.4,406.2L780.7,405.5L776.6,404.1L773.2,402.8L771.2,401.1L768.5,399.7L765.1,398.4L763,396.7L759,395L754.9,393.6L752.9,391.6ZM715.1,363.3L726.5,362.9L724.2,368.9L730.7,377.7L727.7,378.2L719.8,370.3ZM1083.9,608.8L1089.7,605L1097.6,601.1L1105.5,599.3L1115.1,600L1122.1,602.8L1126.5,605.8L1136.2,605.3L1140.6,609.3L1146.7,613.7L1155.5,616.4L1161.6,618.6L1166.4,621.1L1162.5,623.4L1150.2,624.3L1139.7,624.6L1143.2,619.9L1137.1,617.2L1132.7,614.6L1130,610.2L1120.4,607.6L1112.5,605.8L1106.3,605L1101.1,602.8L1094.9,605.3L1090.5,608.5ZM1129.2,571.6L1137.9,571.2L1139.7,569.5L1144.1,572.5L1144.6,576L1142.8,578.6L1141.4,575.1L1138.8,572.5L1130,574.2ZM1133.5,589.2L1136.2,583.5L1138.8,584.8L1141.1,590.9L1140.6,595.3L1137.9,594.4L1136.2,590.9ZM1164.3,634.8L1167.8,633.9L1175.7,634.8L1181.8,635.7L1183.6,632.2L1178.3,629.5L1175.7,626.9L1172.2,625.7L1177.4,624.3L1185.3,625.1L1190.6,624.3L1199.4,626.4L1202.9,629.5L1209,632.2L1210.8,634.8L1208.2,637.4L1201.1,636.2L1195.9,636.6L1190.6,638.3L1188,641.8L1185.3,638.3L1178.3,637.4L1171.3,638.3L1166,637.4ZM1134.4,636.6L1137.9,634.8L1145,635.7L1150.2,637.4L1149.3,639.7L1143.2,641.5L1137.9,639.7ZM1219.2,635.7L1224,634.8L1230.1,635.3L1231.9,637.1L1229.2,639.2L1219.6,639.5ZM542.6,622.3L548,624.6L551,628L545.7,632.2L542.6,631.1L541.5,626.5ZM536.5,616.9L541.9,618.1L539.2,619.8ZM531.9,615L536.1,615.4L534.2,616.2ZM524.3,612.1L529.3,613.5L526.2,614.4ZM512.9,608.5L516.3,607.2L516.7,609.3L514.4,609.8Z" fill="#c8e6c9" stroke="#62625d" stroke-width="1.15" stroke-linejoin="round"/>
<path d="M778.3,271.6L795.3,268.8L809.4,266.7L820.8,265L821.3,266.4L815.5,268.1L834.8,268.1L833.1,274.1L819.9,275.1L818.2,277.6L806.7,281.3L809.4,276.9L797.1,279.9L791.8,279.4L796.2,274.6ZM828.3,306.6L839.2,308L851.5,303.6L854.1,301.5L846.6,296.9L855,298.3L867.3,301.5L876.1,299.2L884.9,295.7L891.9,294.3L899.8,296.9L891.9,298.7L881.4,301.8L872.6,306.2L863.8,310.6L851.5,311.8L839.2,311.5ZM883.1,329L891.9,325L900.7,321.1L919.1,323.4L902.4,325.5L891.9,327.8L884,329.9ZM943.9,336.1L950,335.2L957,333.8L954.4,338.7L950,342.6L943.9,345.7L946.5,340.4ZM976.3,365L986,361.2L987.7,369.4L992.1,375.6L997,384.3L999.2,391.4L996,393.1L992.1,386.1L985.1,377.3L979.8,371.2ZM965.8,364.1L967.6,361.9L970.2,365.9L971.9,372.9L978.1,382.6L976.3,384.3L969.3,375.6ZM1029.6,420.2L1038,415.6L1045.6,411.8L1051,410.3L1056.3,408L1058.6,403.4L1072.4,404.5L1076.9,410.3L1084.6,411L1086.9,421.7L1083.8,419.4L1076.2,420.2L1065.5,421.7L1060.9,418.7L1062.4,414.5L1057.1,417.2L1053.3,418.7L1042.6,421L1038.8,418.3L1036.5,419.1ZM1085.3,427.1L1073.9,426.3L1068.5,427.9L1064,432.4L1060.9,436.3L1064.7,434L1068.5,430.9L1064.7,437.8L1063.2,442.4L1061.7,448.5L1062.4,453.8L1064,457.6L1067,459.2L1071.6,456.1L1073.9,450L1072.4,443.9L1073.9,437.8L1079.2,434L1080,431.7L1083.8,428.6ZM1086.1,427.1L1091.4,425.6L1099.1,424.4L1106.7,424.4L1114.3,426.3L1121.2,433.2L1122,436.3L1114.3,434.7L1109.8,431.3L1112,436.3L1109,444.7L1103.7,448.5L1102.1,443.1L1099.1,440.8L1092.2,443.1L1096.8,438.5L1096.8,433.2L1091.4,429.4ZM1096,458.4L1098.3,455.4L1103.7,456.1L1110.5,451.5L1118.2,451.5L1129.6,449.2L1130.4,450.4L1123.5,454.6L1117.4,456.5L1109,459.9L1101.4,459.9ZM1123.5,446.2L1126.5,443.5L1137.2,441.2L1146.4,440.8L1151,439.3L1151,443.9L1146.4,446.2L1138.8,446.2L1129.6,446.2ZM870.8,459.2L876.2,460.7L877.7,465.3L873.1,463.8ZM1114.3,569.6L1116.6,570L1117,572.2L1114.7,572.6Z" fill="#a8d8ea" stroke="#86bcdc" stroke-width="0.8" stroke-linejoin="round"/>
<path d="M786.1,424L792.2,424.4L795.3,428.2L807.5,428.2L824.3,425.9L840.3,425.6M839.3,402.6L839.3,422.5L840.3,425.6L843.4,429.4L839.5,438.5L839.3,456.1M783.8,456.1L885,456.1M816.6,456.1L816.6,479L857.9,509.6L859.4,514.9L857.1,521.8L857.1,527.2M862.1,456.1L862.1,501.2L857.1,501.2L857.9,509.6M862.1,494.3L1010.4,494.3M846.8,402.6L846.8,410.3L857.1,420.2L860.2,429.4L870.1,437L885,437M885,433.2L938.4,433.2L938.4,463.8L885,463.8L885,433.2M885,456.1L885,463.8M900.2,463.8L900.2,537.6M938.4,402.6L938.4,433.2M938.4,426L995.6,426M938.4,448.5L980.8,448.5L988.4,449.6L996,452.3M938.4,463.8L953.7,463.8L953.7,471.4L1005.2,471.4M953.7,471.4L953.7,494.3M946.4,494.3L946.4,498.1L969.3,498.1L969.3,513L975.4,514.9L983.8,516.5L990.7,518.8L999.8,518.8L1011.4,520M946.1,498.1L946.1,532.5L918.9,532.5L919.7,534.2M990.5,402.6L993.7,414.1L995.6,426L996.4,430.9L996.4,444.7M996.4,444.7L1036.3,444.7M1001.6,467L1032.4,466.8L1035,468.3M996.4,444.7L996,452.3L999.1,458.4L1000.6,463.8L1001.6,467L1005.2,471.4L1008.2,472.9L1010.5,478.3L1010.4,494.3L1010.4,498.1L1011.8,506.5L1011.4,520L1014.8,520.7L1014.8,532.6L1016.6,536.3L1018.2,544L1016.6,550.1M1030.4,420.2L1028.1,424.8L1023.5,428.6L1024.6,435.1L1036.5,442.4L1036.3,444.7L1037.2,450.8L1044.5,455.4L1038,460.7L1037.2,466.1L1035,468.3L1034.2,471.4L1040.3,476.7L1044.1,480.6L1044.1,485.2L1049.5,492L1052.3,494.3L1049.5,498.1L1047.9,502L1044.9,508.8L1041.1,511.9L1037.2,519.5L1036.7,524.9L1038,530.2L1034.2,536.3L1033.1,540.2L1047.7,540.2L1047.2,543.2L1048.7,546.3M1010.4,498.1L1044.5,498.1L1042.8,502L1047.9,502M1014.8,524.7L1036.7,524.9M1049.5,498.1L1060.5,498.1L1060.5,497L1093.9,497.4L1109.1,497.5L1153.5,497.8M1043.4,509.6L1098.3,509.6L1103.7,508.1L1114.3,508.8L1115.1,511.1L1124.3,511.1L1133,518.2M1059.4,509.6L1057.3,533.3L1057.9,544.7M1079.2,509.6L1083.8,530.2L1083.8,540.2M1064.7,545.5L1064,540.2L1083.8,540.2L1084.9,542.5L1105.2,543.4L1106.7,544.7L1110.5,542.5M1098.3,509.6L1105.2,519.5L1110.5,524.9L1113.6,531.8L1115.1,532.5M1040.8,452.2L1062.4,452.4M1042.6,421.4L1053.3,425.6L1060.1,426.3L1063.2,430.1L1064,432.4M1064.5,458L1064.5,476.7L1060.9,487.4L1060.5,488.2M1052.3,494.3L1057.1,493.6L1060.5,488.2L1067.8,488.2L1076.2,486.7L1080.8,481.3L1085.3,478.3L1089.9,480.6L1096.8,482.1L1102.1,483.6L1105.2,480.6L1108.2,479L1115.3,473.7L1118,466.5M1085.3,458.4L1085.3,478.3M1068.5,458L1085.3,458.4L1095.6,458.2M1118,453.8L1118,473.5M1118,473.5L1154.1,473.5M1123.8,454.1L1123.8,456.1L1157.4,456.1L1162.4,461L1168.5,463.8M1162.4,461L1159.4,464.5L1159.4,466.8L1162.3,470.3L1157.1,472.9L1155.9,475.2M1154.1,473.5L1154.8,483.2L1159.8,483.2M1102.1,483.6L1106.9,490.2L1119.7,490.5L1125.8,482.9L1134.9,476L1139.4,476.6L1144.9,480.6L1150.2,486.7M1125.9,473.5L1125.9,477.5L1134.2,474.5L1139.4,476.6M1106.9,490.2L1093.9,497.4M1172.7,433.2L1172.3,443.9L1173.5,450.4L1171.6,455.7L1171.6,461.5L1170.4,463.8M1186.9,433.2L1183,440.8L1179.2,450.5M1173.4,450.4L1188.4,450.8L1192.2,449.5M1171.6,455.7L1184.6,456L1187.8,456L1189.9,459.9M1184.6,456L1184.2,461.3M1190.1,430.9L1190.9,445.4L1193,447.9" fill="none" stroke="#8a8a85" stroke-width="0.7" stroke-linejoin="round"/>
<path d="M656.5,243.9L656.5,315.9L665.2,316.7L682.8,326L690,322M690,322L697.9,319.7L704,325.5L712.8,330.8L719.8,338.7L727.7,344.8L740,349.6L740.9,354.1L737,357.7M795.7,402.6L1006.3,402.6L1006.3,399.6L1010.5,404.9L1020.5,405.7L1030.4,408L1039.5,408.8L1048.7,410.3L1057.9,408L1084.6,418.7L1086.9,421.7L1090.7,423.3L1094.5,424.8L1095.3,427.1L1102.9,430.9L1105.9,443.9L1103.7,448.5L1099.8,453.1L1098.3,455.4L1103.7,458.4L1112,454.6L1129.6,450L1128.8,446.2L1128.1,444.7L1131.9,443.9L1146.4,443.9L1148.7,440.8L1157.8,434.7L1162.4,433.2L1186.9,433.2L1187.6,431.3L1193,430.1L1196,426.3L1198.3,420.2L1204.4,414.5L1206.7,416.4L1211.3,415.2L1215.1,417.4L1215.1,427.9L1218.1,430.9L1220.4,432.4M839.2,528L855,527.1L865.6,530.6L884.9,536.7L905.1,536.7L905.9,533.2L918.2,532.3L923.5,536.7L927.1,540L929.7,542.6L934.1,547.9L939.4,552.3L945.5,554.9L949,550.5L954.3,548.4L960.4,550.5L965.7,556.7L971,564.6L974.5,571.6L978,576L990.3,579.5M1028,664.6L1028.9,659.4L1030.7,655L1041.2,654.1L1042.1,649.7L1038.6,647.1L1034.2,645.3L1037.7,643.6L1037.7,640.4L1052.1,640.4L1052.1,654.1L1056.1,655.9M1052.1,640.4L1056.1,636.6L1059.6,635.7M1056.1,655.9L1051.7,662.9L1050,666.4L1055.2,671.7M1051.7,662.9L1046.5,667.3L1043,671.7M1080,666.4L1087,663.8L1096.7,662.9M1185.3,625.1L1184.5,631.3L1186.2,635.7L1185.3,638.3" fill="none" stroke="#6c6c68" stroke-width="1.25" stroke-linejoin="round"/>
</g><g clip-path="url(#mc)"><g fill="#28a745" stroke="#1f3f28" stroke-width="0.8" stroke-linejoin="round"><circle cx="1008.0" cy="458.4" r="6.1"/><path d="M1002.5,467.2h11l-5.5,9.6z"/><circle cx="1013.5" cy="456.0" r="6.1"/><path d="M1008.0,464.8h11l-5.5,9.6z"/><circle cx="990.0" cy="468.9" r="6.1"/><path d="M984.5,477.7h11l-5.5,9.6z"/><circle cx="996.5" cy="468.9" r="6.1"/><path d="M991.0,477.7h11l-5.5,9.6z"/><circle cx="990.0" cy="475.4" r="6.1"/><path d="M984.5,484.2h11l-5.5,9.6z"/><circle cx="1011.0" cy="479.0" r="6.1"/><path d="M1005.5,487.8h11l-5.5,9.6z"/><circle cx="992.4" cy="492.2" r="6.1"/><path d="M986.9,501.0h11l-5.5,9.6z"/><circle cx="1065.0" cy="517.0" r="6.1"/><path d="M1059.5,525.8h11l-5.5,9.6z"/><circle cx="1073.0" cy="519.0" r="6.1"/><path d="M1067.5,527.8h11l-5.5,9.6z"/><circle cx="1109.0" cy="532.7" r="6.1"/><path d="M1103.5,541.5h11l-5.5,9.6z"/><circle cx="1104.0" cy="556.0" r="6.1"/><path d="M1098.5,564.8h11l-5.5,9.6z"/><circle cx="940.5" cy="374.7" r="6.1"/><path d="M935.0,383.5h11l-5.5,9.6z"/><circle cx="843.7" cy="394.0" r="6.1"/><path d="M838.2,402.8h11l-5.5,9.6z"/><circle cx="901.0" cy="437.2" r="6.1"/><path d="M895.5,446.0h11l-5.5,9.6z"/><circle cx="878.4" cy="428.8" r="6.1"/><path d="M872.9,437.6h11l-5.5,9.6z"/><circle cx="880.0" cy="428.2" r="6.1"/><path d="M874.5,437.0h11l-5.5,9.6z"/><circle cx="880.0" cy="443.8" r="6.1"/><path d="M874.5,452.6h11l-5.5,9.6z"/><circle cx="885.8" cy="453.0" r="6.1"/><path d="M880.3,461.8h11l-5.5,9.6z"/><circle cx="874.6" cy="466.3" r="6.1"/><path d="M869.1,475.1h11l-5.5,9.6z"/><circle cx="886.6" cy="516.4" r="6.1"/><path d="M881.1,525.2h11l-5.5,9.6z"/><circle cx="1016.9" cy="420.4" r="6.1"/><path d="M1011.4,429.2h11l-5.5,9.6z"/><circle cx="1023.8" cy="414.9" r="6.1"/><path d="M1018.3,423.7h11l-5.5,9.6z"/><circle cx="1000.7" cy="449.0" r="6.1"/><path d="M995.2,457.8h11l-5.5,9.6z"/><circle cx="1046.4" cy="451.0" r="6.1"/><path d="M1040.9,459.8h11l-5.5,9.6z"/><circle cx="1038.4" cy="446.7" r="6.1"/><path d="M1032.9,455.5h11l-5.5,9.6z"/><circle cx="1169.4" cy="449.2" r="6.1"/><path d="M1163.9,458.0h11l-5.5,9.6z"/><circle cx="1111.4" cy="446.7" r="6.1"/><path d="M1105.9,455.5h11l-5.5,9.6z"/><circle cx="1083.5" cy="446.7" r="6.1"/><path d="M1078.0,455.5h11l-5.5,9.6z"/><circle cx="1196.7" cy="437.8" r="6.1"/><path d="M1191.2,446.6h11l-5.5,9.6z"/><circle cx="1100.1" cy="437.8" r="6.1"/><path d="M1094.6,446.6h11l-5.5,9.6z"/><circle cx="1130.6" cy="437.8" r="6.1"/><path d="M1125.1,446.6h11l-5.5,9.6z"/><circle cx="1194.1" cy="428.1" r="6.1"/><path d="M1188.6,436.9h11l-5.5,9.6z"/><circle cx="1147.9" cy="460.3" r="6.1"/><path d="M1142.4,469.1h11l-5.5,9.6z"/><circle cx="1146.0" cy="461.3" r="6.1"/><path d="M1140.5,470.1h11l-5.5,9.6z"/><circle cx="991.4" cy="473.5" r="6.1"/><path d="M985.9,482.3h11l-5.5,9.6z"/><circle cx="993.4" cy="469.4" r="6.1"/><path d="M987.9,478.2h11l-5.5,9.6z"/><circle cx="1066.4" cy="476.0" r="6.1"/><path d="M1060.9,484.8h11l-5.5,9.6z"/><circle cx="999.1" cy="469.4" r="6.1"/><path d="M993.6,478.2h11l-5.5,9.6z"/><circle cx="1007.4" cy="457.0" r="6.1"/><path d="M1001.9,465.8h11l-5.5,9.6z"/><circle cx="1012.8" cy="464.4" r="6.1"/><path d="M1007.3,473.2h11l-5.5,9.6z"/><circle cx="1080.4" cy="461.3" r="6.1"/><path d="M1074.9,470.1h11l-5.5,9.6z"/><circle cx="1021.8" cy="464.4" r="6.1"/><path d="M1016.3,473.2h11l-5.5,9.6z"/><circle cx="1064.0" cy="471.4" r="6.1"/><path d="M1058.5,480.2h11l-5.5,9.6z"/><circle cx="1131.9" cy="469.3" r="6.1"/><path d="M1126.4,478.1h11l-5.5,9.6z"/><circle cx="1130.1" cy="468.4" r="6.1"/><path d="M1124.6,477.2h11l-5.5,9.6z"/><circle cx="1011.2" cy="483.7" r="6.1"/><path d="M1005.7,492.5h11l-5.5,9.6z"/><circle cx="1133.8" cy="488.5" r="6.1"/><path d="M1128.3,497.3h11l-5.5,9.6z"/><circle cx="1085.5" cy="483.5" r="6.1"/><path d="M1080.0,492.3h11l-5.5,9.6z"/><circle cx="1130.1" cy="483.5" r="6.1"/><path d="M1124.6,492.3h11l-5.5,9.6z"/><circle cx="989.7" cy="491.9" r="6.1"/><path d="M984.2,500.7h11l-5.5,9.6z"/><circle cx="988.1" cy="490.9" r="6.1"/><path d="M982.6,499.7h11l-5.5,9.6z"/><circle cx="1134.9" cy="495.9" r="6.1"/><path d="M1129.4,504.7h11l-5.5,9.6z"/><circle cx="1131.4" cy="493.7" r="6.1"/><path d="M1125.9,502.5h11l-5.5,9.6z"/><circle cx="1101.4" cy="494.8" r="6.1"/><path d="M1095.9,503.6h11l-5.5,9.6z"/><circle cx="1069.7" cy="494.6" r="6.1"/><path d="M1064.2,503.4h11l-5.5,9.6z"/><circle cx="995.0" cy="508.8" r="6.1"/><path d="M989.5,517.6h11l-5.5,9.6z"/><circle cx="1067.2" cy="509.0" r="6.1"/><path d="M1061.7,517.8h11l-5.5,9.6z"/><circle cx="1118.4" cy="510.7" r="6.1"/><path d="M1112.9,519.5h11l-5.5,9.6z"/><circle cx="1128.9" cy="506.4" r="6.1"/><path d="M1123.4,515.2h11l-5.5,9.6z"/><circle cx="1075.4" cy="506.4" r="6.1"/><path d="M1069.9,515.2h11l-5.5,9.6z"/><circle cx="984.9" cy="524.9" r="6.1"/><path d="M979.4,533.7h11l-5.5,9.6z"/><circle cx="1003.0" cy="534.3" r="6.1"/><path d="M997.5,543.1h11l-5.5,9.6z"/><circle cx="1007.6" cy="537.2" r="6.1"/><path d="M1002.1,546.0h11l-5.5,9.6z"/><circle cx="1113.1" cy="517.3" r="6.1"/><path d="M1107.6,526.1h11l-5.5,9.6z"/><circle cx="1110.3" cy="532.7" r="6.1"/><path d="M1104.8,541.5h11l-5.5,9.6z"/><circle cx="1115.1" cy="530.3" r="6.1"/><path d="M1109.6,539.1h11l-5.5,9.6z"/><circle cx="1099.7" cy="538.4" r="6.1"/><path d="M1094.2,547.2h11l-5.5,9.6z"/><circle cx="1121.4" cy="546.1" r="6.1"/><path d="M1115.9,554.9h11l-5.5,9.6z"/><circle cx="1112.3" cy="542.5" r="6.1"/><path d="M1106.8,551.3h11l-5.5,9.6z"/><circle cx="1102.4" cy="554.1" r="6.1"/><path d="M1096.9,562.9h11l-5.5,9.6z"/><circle cx="1100.1" cy="553.4" r="6.1"/><path d="M1094.6,562.2h11l-5.5,9.6z"/></g>
<g font-size="9.3" fill="#000"><rect x="948.7" y="366.4" width="75.5" height="11.2" rx="1.4" fill="#fff" fill-opacity="0.7"/><text x="950.1" y="375.2" textLength="72.7" lengthAdjust="spacingAndGlyphs">VE5RJK [Normal]</text><rect x="851.9" y="385.7" width="70.8" height="11.2" rx="1.4" fill="#fff" fill-opacity="0.7"/><text x="853.3" y="394.5" textLength="68.0" lengthAdjust="spacingAndGlyphs">K8IMT [Normal]</text><rect x="909.2" y="428.9" width="76.0" height="11.2" rx="1.4" fill="#fff" fill-opacity="0.7"/><text x="910.6" y="437.7" textLength="73.2" lengthAdjust="spacingAndGlyphs">K7VWV [Normal]</text><rect x="886.6" y="420.5" width="75.3" height="11.2" rx="1.4" fill="#fff" fill-opacity="0.7"/><text x="888.0" y="429.3" textLength="72.5" lengthAdjust="spacingAndGlyphs">W7AYU [Normal]</text><rect x="888.2" y="419.9" width="75.3" height="11.2" rx="1.4" fill="#fff" fill-opacity="0.7"/><text x="889.6" y="428.7" textLength="72.5" lengthAdjust="spacingAndGlyphs">W7AYU [Normal]</text><rect x="888.2" y="435.5" width="80.4" height="11.2" rx="1.4" fill="#fff" fill-opacity="0.7"/><text x="889.6" y="444.3" textLength="77.6" lengthAdjust="spacingAndGlyphs">KD0NBV [Normal]</text><rect x="894.0" y="444.7" width="78.9" height="11.2" rx="1.4" fill="#fff" fill-opacity="0.7"/><text x="895.4" y="453.5" textLength="76.1" lengthAdjust="spacingAndGlyphs">KG7RCF [Normal]</text><rect x="882.8" y="458.0" width="71.8" height="11.2" rx="1.4" fill="#fff" fill-opacity="0.7"/><text x="884.2" y="466.8" textLength="69.0" lengthAdjust="spacingAndGlyphs">K7ETC [Normal]</text><rect x="894.8" y="508.1" width="82.3" height="11.2" rx="1.4" fill="#fff" fill-opacity="0.7"/><text x="896.2" y="516.9" textLength="79.5" lengthAdjust="spacingAndGlyphs">WD8KRV [Normal]</text><rect x="1025.1" y="412.1" width="80.2" height="11.2" rx="1.4" fill="#fff" fill-opacity="0.7"/><text x="1026.5" y="420.9" textLength="77.4" lengthAdjust="spacingAndGlyphs">KE0ZDH [Normal]</text><rect x="1032.0" y="406.6" width="74.2" height="11.2" rx="1.4" fill="#fff" fill-opacity="0.7"/><text x="1033.4" y="415.4" textLength="71.4" lengthAdjust="spacingAndGlyphs">K1BRG [Normal]</text><rect x="1008.9" y="440.7" width="82.6" height="11.2" rx="1.4" fill="#fff" fill-opacity="0.7"/><text x="1010.3" y="449.5" textLength="79.8" lengthAdjust="spacingAndGlyphs">WH6AKZ [Normal]</text><rect x="1054.6" y="442.7" width="75.3" height="11.2" rx="1.4" fill="#fff" fill-opacity="0.7"/><text x="1056.0" y="451.5" textLength="72.5" lengthAdjust="spacingAndGlyphs">KB0RPJ [Normal]</text><rect x="1046.6" y="438.4" width="79.2" height="11.2" rx="1.4" fill="#fff" fill-opacity="0.7"/><text x="1048.0" y="447.2" textLength="76.4" lengthAdjust="spacingAndGlyphs">KF0DCV [Normal]</text><rect x="1177.6" y="440.9" width="67.0" height="11.2" rx="1.4" fill="#fff" fill-opacity="0.7"/><text x="1179.0" y="449.7" textLength="64.2" lengthAdjust="spacingAndGlyphs">W2JC [Normal]</text><rect x="1119.6" y="438.4" width="74.9" height="11.2" rx="1.4" fill="#fff" fill-opacity="0.7"/><text x="1121.0" y="447.2" textLength="72.1" lengthAdjust="spacingAndGlyphs">AB9MK [Normal]</text><rect x="1091.7" y="438.4" width="74.0" height="11.2" rx="1.4" fill="#fff" fill-opacity="0.7"/><text x="1093.1" y="447.2" textLength="71.2" lengthAdjust="spacingAndGlyphs">N9EHK [Normal]</text><rect x="1140.1" y="426.6" width="73.3" height="11.2" rx="1.4" fill="#fff" fill-opacity="0.7"/><text x="1141.5" y="435.4" textLength="70.5" lengthAdjust="spacingAndGlyphs">N0LSD [Normal]</text><rect x="1204.9" y="429.5" width="74.3" height="11.2" rx="1.4" fill="#fff" fill-opacity="0.7"/><text x="1206.3" y="438.3" textLength="71.5" lengthAdjust="spacingAndGlyphs">K1VNU [Normal]</text><rect x="1108.3" y="429.5" width="75.1" height="11.2" rx="1.4" fill="#fff" fill-opacity="0.7"/><text x="1109.7" y="438.3" textLength="72.3" lengthAdjust="spacingAndGlyphs">KE8SW [Normal]</text><rect x="1138.8" y="429.5" width="73.3" height="11.2" rx="1.4" fill="#fff" fill-opacity="0.7"/><text x="1140.2" y="438.3" textLength="70.5" lengthAdjust="spacingAndGlyphs">N0LSD [Normal]</text><rect x="1202.3" y="419.8" width="77.7" height="11.2" rx="1.4" fill="#fff" fill-opacity="0.7"/><text x="1203.7" y="428.6" textLength="74.9" lengthAdjust="spacingAndGlyphs">KC1JMH [Normal]</text><rect x="1156.1" y="452.0" width="82.5" height="11.2" rx="1.4" fill="#fff" fill-opacity="0.7"/><text x="1157.5" y="460.8" textLength="79.7" lengthAdjust="spacingAndGlyphs">KE8UNW [Normal]</text><rect x="1154.2" y="453.0" width="82.5" height="11.2" rx="1.4" fill="#fff" fill-opacity="0.7"/><text x="1155.6" y="461.8" textLength="79.7" lengthAdjust="spacingAndGlyphs">KE8UNW [Normal]</text><rect x="999.6" y="465.2" width="79.0" height="11.2" rx="1.4" fill="#fff" fill-opacity="0.7"/><text x="1001.0" y="474.0" textLength="76.2" lengthAdjust="spacingAndGlyphs">KM4FFB [Normal]</text><rect x="1001.6" y="461.1" width="66.0" height="11.2" rx="1.4" fill="#fff" fill-opacity="0.7"/><text x="1003.0" y="469.9" textLength="63.2" lengthAdjust="spacingAndGlyphs">KC0F [Normal]</text><rect x="1074.6" y="467.7" width="72.4" height="11.2" rx="1.4" fill="#fff" fill-opacity="0.7"/><text x="1076.0" y="476.5" textLength="69.6" lengthAdjust="spacingAndGlyphs">KY4BC [Normal]</text><rect x="1007.3" y="461.1" width="80.2" height="11.2" rx="1.4" fill="#fff" fill-opacity="0.7"/><text x="1008.7" y="469.9" textLength="77.4" lengthAdjust="spacingAndGlyphs">KD0NSV [Normal]</text><rect x="1015.6" y="448.7" width="75.6" height="11.2" rx="1.4" fill="#fff" fill-opacity="0.7"/><text x="1017.0" y="457.5" textLength="72.8" lengthAdjust="spacingAndGlyphs">W0SBV [Normal]</text><rect x="1021.0" y="456.1" width="73.9" height="11.2" rx="1.4" fill="#fff" fill-opacity="0.7"/><text x="1022.4" y="464.9" textLength="71.1" lengthAdjust="spacingAndGlyphs">N0KOE [Normal]</text><rect x="1088.6" y="453.0" width="77.7" height="11.2" rx="1.4" fill="#fff" fill-opacity="0.7"/><text x="1090.0" y="461.8" textLength="74.9" lengthAdjust="spacingAndGlyphs">KI4HDU [Normal]</text><rect x="1030.0" y="456.1" width="75.6" height="11.2" rx="1.4" fill="#fff" fill-opacity="0.7"/><text x="1031.4" y="464.9" textLength="72.8" lengthAdjust="spacingAndGlyphs">NZ1ON [Normal]</text><rect x="1072.2" y="463.1" width="77.0" height="11.2" rx="1.4" fill="#fff" fill-opacity="0.7"/><text x="1073.6" y="471.9" textLength="74.2" lengthAdjust="spacingAndGlyphs">KC9TYA [Normal]</text><rect x="1140.1" y="461.0" width="80.3" height="11.2" rx="1.4" fill="#fff" fill-opacity="0.7"/><text x="1141.5" y="469.8" textLength="77.5" lengthAdjust="spacingAndGlyphs">KQ4LWP [Normal]</text><rect x="1138.3" y="460.1" width="80.3" height="11.2" rx="1.4" fill="#fff" fill-opacity="0.7"/><text x="1139.7" y="468.9" textLength="77.5" lengthAdjust="spacingAndGlyphs">KQ4LWP [Normal]</text><rect x="1019.4" y="475.4" width="76.5" height="11.2" rx="1.4" fill="#fff" fill-opacity="0.7"/><text x="1020.8" y="484.2" textLength="73.7" lengthAdjust="spacingAndGlyphs">KE5LYN [Normal]</text><rect x="1142.0" y="480.2" width="66.9" height="11.2" rx="1.4" fill="#fff" fill-opacity="0.7"/><text x="1143.4" y="489.0" textLength="64.1" lengthAdjust="spacingAndGlyphs">W8JB [Normal]</text><rect x="1093.7" y="475.2" width="72.3" height="11.2" rx="1.4" fill="#fff" fill-opacity="0.7"/><text x="1095.1" y="484.0" textLength="69.5" lengthAdjust="spacingAndGlyphs">WW9Y [Normal]</text><rect x="1138.3" y="475.2" width="76.4" height="11.2" rx="1.4" fill="#fff" fill-opacity="0.7"/><text x="1139.7" y="484.0" textLength="73.6" lengthAdjust="spacingAndGlyphs">KO4BIA [Normal]</text><rect x="997.9" y="483.6" width="76.7" height="11.2" rx="1.4" fill="#fff" fill-opacity="0.7"/><text x="999.3" y="492.4" textLength="73.9" lengthAdjust="spacingAndGlyphs">KJ5MIW [Normal]</text><rect x="996.3" y="482.6" width="76.7" height="11.2" rx="1.4" fill="#fff" fill-opacity="0.7"/><text x="997.7" y="491.4" textLength="73.9" lengthAdjust="spacingAndGlyphs">KJ5MIW [Normal]</text><rect x="1143.1" y="487.6" width="76.1" height="11.2" rx="1.4" fill="#fff" fill-opacity="0.7"/><text x="1144.5" y="496.4" textLength="73.3" lengthAdjust="spacingAndGlyphs">KJ4CTD [Normal]</text><rect x="1139.6" y="485.4" width="72.4" height="11.2" rx="1.4" fill="#fff" fill-opacity="0.7"/><text x="1141.0" y="494.2" textLength="69.6" lengthAdjust="spacingAndGlyphs">KY4BC [Normal]</text><rect x="1109.6" y="486.5" width="77.7" height="11.2" rx="1.4" fill="#fff" fill-opacity="0.7"/><text x="1111.0" y="495.3" textLength="74.9" lengthAdjust="spacingAndGlyphs">KI4HDU [Normal]</text><rect x="1077.9" y="486.3" width="76.4" height="11.2" rx="1.4" fill="#fff" fill-opacity="0.7"/><text x="1079.3" y="495.1" textLength="73.6" lengthAdjust="spacingAndGlyphs">W4EAH [Normal]</text><rect x="1003.2" y="500.5" width="77.4" height="11.2" rx="1.4" fill="#fff" fill-opacity="0.7"/><text x="1004.6" y="509.3" textLength="74.6" lengthAdjust="spacingAndGlyphs">N5DOM [Normal]</text><rect x="1075.4" y="500.7" width="72.9" height="11.2" rx="1.4" fill="#fff" fill-opacity="0.7"/><text x="1076.8" y="509.5" textLength="70.1" lengthAdjust="spacingAndGlyphs">K4EXA [Normal]</text><rect x="1126.6" y="502.4" width="75.5" height="11.2" rx="1.4" fill="#fff" fill-opacity="0.7"/><text x="1128.0" y="511.2" textLength="72.7" lengthAdjust="spacingAndGlyphs">KN4AM [Normal]</text><rect x="1137.1" y="498.1" width="80.3" height="11.2" rx="1.4" fill="#fff" fill-opacity="0.7"/><text x="1138.5" y="506.9" textLength="77.5" lengthAdjust="spacingAndGlyphs">KQ4LWP [Normal]</text><rect x="1083.6" y="498.1" width="77.3" height="11.2" rx="1.4" fill="#fff" fill-opacity="0.7"/><text x="1085.0" y="506.9" textLength="74.5" lengthAdjust="spacingAndGlyphs">KQ4PLL [Normal]</text><rect x="993.1" y="516.6" width="69.1" height="11.2" rx="1.4" fill="#fff" fill-opacity="0.7"/><text x="994.5" y="525.4" textLength="66.3" lengthAdjust="spacingAndGlyphs">AI5TS [Normal]</text><rect x="1011.2" y="526.0" width="77.3" height="11.2" rx="1.4" fill="#fff" fill-opacity="0.7"/><text x="1012.6" y="534.8" textLength="74.5" lengthAdjust="spacingAndGlyphs">W5MYR [Normal]</text><rect x="1015.8" y="528.9" width="77.3" height="11.2" rx="1.4" fill="#fff" fill-opacity="0.7"/><text x="1017.2" y="537.7" textLength="74.5" lengthAdjust="spacingAndGlyphs">W5MYR [Normal]</text><rect x="1121.3" y="509.0" width="74.3" height="11.2" rx="1.4" fill="#fff" fill-opacity="0.7"/><text x="1122.7" y="517.8" textLength="71.5" lengthAdjust="spacingAndGlyphs">N4VAD [Normal]</text><rect x="1118.5" y="524.4" width="79.6" height="11.2" rx="1.4" fill="#fff" fill-opacity="0.7"/><text x="1119.9" y="533.2" textLength="76.8" lengthAdjust="spacingAndGlyphs">K4WOW [Normal]</text><rect x="1123.3" y="522.0" width="79.6" height="11.2" rx="1.4" fill="#fff" fill-opacity="0.7"/><text x="1124.7" y="530.8" textLength="76.8" lengthAdjust="spacingAndGlyphs">K4WOW [Normal]</text><rect x="1107.9" y="530.1" width="80.0" height="11.2" rx="1.4" fill="#fff" fill-opacity="0.7"/><text x="1109.3" y="538.9" textLength="77.2" lengthAdjust="spacingAndGlyphs">QH4GPL [Normal]</text><rect x="1129.6" y="537.8" width="83.9" height="11.2" rx="1.4" fill="#fff" fill-opacity="0.7"/><text x="1131.0" y="546.6" textLength="81.1" lengthAdjust="spacingAndGlyphs">WW4GPL [Normal]</text><rect x="1120.5" y="534.2" width="83.9" height="11.2" rx="1.4" fill="#fff" fill-opacity="0.7"/><text x="1121.9" y="543.0" textLength="81.1" lengthAdjust="spacingAndGlyphs">WW4GPL [Normal]</text><rect x="1110.6" y="545.8" width="66.6" height="11.2" rx="1.4" fill="#fff" fill-opacity="0.7"/><text x="1112.0" y="554.6" textLength="63.8" lengthAdjust="spacingAndGlyphs">W2KI [Normal]</text><rect x="1108.3" y="545.1" width="66.6" height="11.2" rx="1.4" fill="#fff" fill-opacity="0.7"/><text x="1109.7" y="553.9" textLength="63.8" lengthAdjust="spacingAndGlyphs">W2KI [Normal]</text></g></g><rect x="435.5" y="204.5" width="916" height="466" fill="none" stroke="#000" stroke-width="1.2"/>
<path d="M511.5,670v4.5M663.5,670v4.5M816.5,670v4.5M969.5,670v4.5M1121.5,670v4.5M1274.5,670v4.5M435,624.5h-4.5M435,547.5h-4.5M435,471.5h-4.5M435,395.5h-4.5M435,318.5h-4.5M435,242.5h-4.5" stroke="#000" stroke-width="1" fill="none"/>
<g font-size="8.9" fill="#000"><text x="511.3" y="684.8" text-anchor="middle" textLength="21.9" lengthAdjust="spacingAndGlyphs">−160</text><text x="664.0" y="684.8" text-anchor="middle" textLength="21.9" lengthAdjust="spacingAndGlyphs">−140</text><text x="816.6" y="684.8" text-anchor="middle" textLength="21.9" lengthAdjust="spacingAndGlyphs">−120</text><text x="969.3" y="684.8" text-anchor="middle" textLength="21.9" lengthAdjust="spacingAndGlyphs">−100</text><text x="1122.0" y="684.8" text-anchor="middle" textLength="16.6" lengthAdjust="spacingAndGlyphs">−80</text><text x="1274.6" y="684.8" text-anchor="middle" textLength="16.6" lengthAdjust="spacingAndGlyphs">−60</text><text x="424.8" y="627.4" text-anchor="end" textLength="9.6" lengthAdjust="spacingAndGlyphs">20</text><text x="424.8" y="551.0" text-anchor="end" textLength="9.6" lengthAdjust="spacingAndGlyphs">30</text><text x="424.8" y="474.6" text-anchor="end" textLength="9.6" lengthAdjust="spacingAndGlyphs">40</text><text x="424.8" y="398.2" text-anchor="end" textLength="9.6" lengthAdjust="spacingAndGlyphs">50</text><text x="424.8" y="321.8" text-anchor="end" textLength="9.6" lengthAdjust="spacingAndGlyphs">60</text><text x="424.8" y="245.4" text-anchor="end" textLength="9.6" lengthAdjust="spacingAndGlyphs">70</text></g>
<g font-size="10.3" fill="#000"><text x="892.7" y="699.8" text-anchor="middle" textLength="47.3" lengthAdjust="spacingAndGlyphs">Longitude</text></g>
<g font-size="10.3" fill="#000" transform="translate(408,438.1) rotate(-90)"><text x="0.0" y="0.0" text-anchor="middle" textLength="39.0" lengthAdjust="spacingAndGlyphs">Latitude</text></g>
<g font-size="14.7" font-weight="bold" fill="#000"><text x="893.0" y="196.2" text-anchor="middle" textLength="338.7" lengthAdjust="spacingAndGlyphs">F104Mapper  –  F!104 Situation Report Map</text></g><rect x="439.5" y="609.5" width="132" height="56" rx="2.5" fill="#fff" fill-opacity="0.88" stroke="#ccc" stroke-width="1"/>
<g font-size="8.9" fill="#000">
<text x="505.2" y="619.8" text-anchor="middle" textLength="27.2" lengthAdjust="spacingAndGlyphs">Status</text>
<rect x="443" y="627.1" width="18" height="6.6" fill="#28a745"/>
<text x="467.0" y="633.4" text-anchor="start" textLength="42.6" lengthAdjust="spacingAndGlyphs">1  Normal</text>
<rect x="443" y="640.4" width="18" height="6.6" fill="#ffc107"/>
<text x="467.0" y="646.7" text-anchor="start" textLength="54.1" lengthAdjust="spacingAndGlyphs">2  Degraded</text>
<rect x="443" y="653.7" width="18" height="6.6" fill="#dc3545"/>
<text x="467.0" y="660.0" text-anchor="start" textLength="100.1" lengthAdjust="spacingAndGlyphs">3  Significant Problems</text>
</g></svg></body></html>
